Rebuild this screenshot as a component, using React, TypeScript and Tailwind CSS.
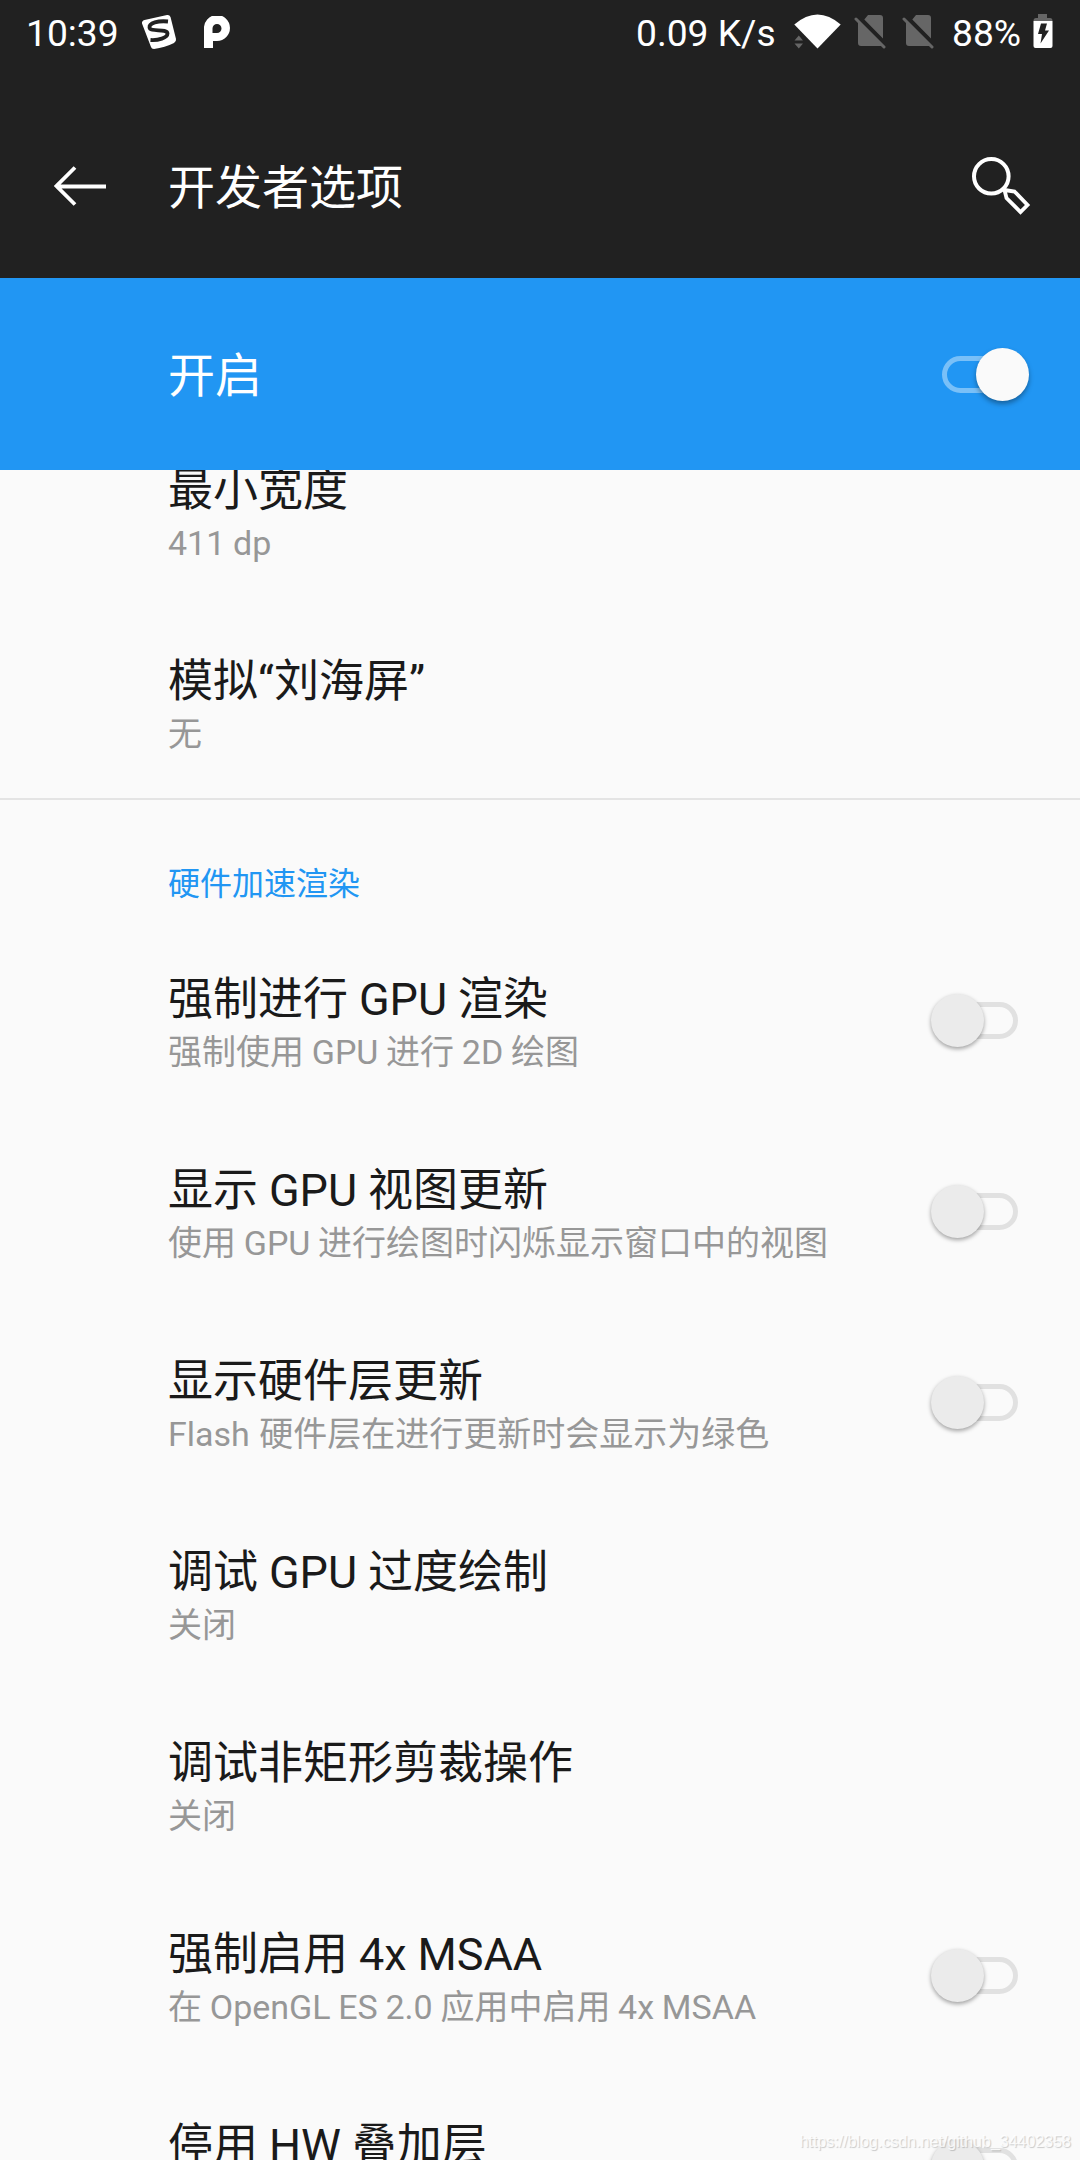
import React from "react";

function Toggle({ on = false }: { on?: boolean }) {
  if (on) {
    return (
      <span className="relative block h-[54px] w-[88px]">
        <span className="absolute left-0 top-[8px] h-[37px] w-[74px] rounded-full border-[5px] border-white/40" />
        <span className="absolute left-[34px] top-0 size-[53px] rounded-full bg-[#fafafa] shadow-[0_3px_5px_rgba(0,0,0,0.35)]" />
      </span>
    );
  }
  return (
    <span className="relative block h-[54px] w-[88px]">
      <span className="absolute left-[14px] top-[8px] h-[37px] w-[74px] rounded-full border-[5px] border-[#e1e1e1]" />
      <span className="absolute left-[1px] top-0 size-[53px] rounded-full bg-[#ebebeb] shadow-[0_2px_4px_rgba(0,0,0,0.36)]" />
    </span>
  );
}

type RowProps = { title: string; note?: string; noteSpacing?: string; toggle?: boolean };

function Row({ title, note, noteSpacing = "[word-spacing:-0.7px]", toggle }: RowProps) {
  return (
    <div className="flex h-[191px] shrink-0 items-start justify-between pl-[168px] pr-[62px]">
      <div className="pt-[49px]">
        <div className="whitespace-nowrap text-[45px] leading-[52px] text-[#1a1a1a] [word-spacing:-0.25px]">{title}</div>
        {note && (
          <div className={`mt-[3px] whitespace-nowrap text-[34px] leading-[46px] text-[#979797] ${noteSpacing}`}>{note}</div>
        )}
      </div>
      {toggle && (
        <div className="pt-[69px]">
          <Toggle />
        </div>
      )}
    </div>
  );
}

function NoSim() {
  return (
    <svg width="32" height="36" viewBox="0 0 32 36">
      <path d="M14 1H26Q29 1 29 4V24.500L10.300 5.500ZM4 8L28 32H7Q4 32 4 29Z" fill="#666" />
      <path d="M2 5L30 33" stroke="#666" strokeWidth="3" strokeLinecap="round" />
    </svg>
  );
}

function StatusBar() {
  return (
    <div className="flex h-[64px] items-start justify-between pl-[26px] pr-[27px] text-[37.2px] leading-[66px] text-white">
      <div className="flex">
        <span className="w-[92px]">10:39</span>
        <svg className="ml-[23px] mt-[14px]" width="36" height="36" viewBox="0 0 36 36">
          <path d="M3.500 6L26 1Q28.500 .5 29.500 3L35 25Q35.500 27.500 33 29Q24 33.500 13 35Q10.500 35 10 33L1 9.500Q.5 7 3.500 6Z" fill="#fff" />
          <path d="M27 7.500C17 6.500 8 9 8.500 13.500C9 18.500 26 14 26.500 19.500C26.500 24 17 26.500 9.500 26" fill="none" stroke="#212121" strokeWidth="3.800" />
        </svg>
        <svg className="ml-[27px] mt-[16px]" width="26" height="32" viewBox="0 0 26 32">
          <path fillRule="evenodd" d="M0 32V13A13 13 0 1 1 13 25H9V32ZM13 8A4.500 4.500 0 0 0 8.500 12.500V17H13A4.500 4.500 0 0 0 13 8Z" fill="#fff" />
        </svg>
      </div>
      <div className="flex">
        <span className="w-[138px] whitespace-nowrap">0.09 K/s</span>
        <svg className="ml-[20px] mt-[14px]" width="48" height="36" viewBox="0 0 48 36">
          <path d="M.3 10.500Q23.500 -9.500 46.700 10.500L23.500 34.500Z" fill="#fff" />
          <path d="M.5 26.500L4.800 21.500L9 26.500ZM.5 29.500H9L4.800 34.500Z" fill="#666" />
        </svg>
        <div className="ml-[12px] mt-[14px] flex gap-[16px]">
          <NoSim />
          <NoSim />
        </div>
        <span className="ml-[18px] w-[73px]">88%</span>
        <svg className="ml-[8px] mt-[14px]" width="20" height="35" viewBox="0 0 20 35">
          <path d="M5 0H14V4H17Q19.500 4 19.500 7H.5Q.5 4 3 4H5Z" fill="#666" />
          <path d="M.5 7H19.500V32Q19.500 34 17.500 34H2.500Q.5 34 .5 32Z" fill="#fff" />
          <path d="M8 9.500H14L12 16.500H16L7.500 29.500L9 20H5Z" fill="#212121" />
        </svg>
      </div>
    </div>
  );
}

const rows: RowProps[] = [
  { title: "强制进行 GPU 渲染", note: "强制使用 GPU 进行 2D 绘图", toggle: true },
  { title: "显示 GPU 视图更新", note: "使用 GPU 进行绘图时闪烁显示窗口中的视图", toggle: true },
  {
    title: "显示硬件层更新",
    note: "Flash 硬件层在进行更新时会显示为绿色",
    noteSpacing: "[word-spacing:1px]",
    toggle: true,
  },
  { title: "调试 GPU 过度绘制", note: "关闭" },
  { title: "调试非矩形剪裁操作", note: "关闭" },
  { title: "强制启用 4x MSAA", note: "在 OpenGL ES 2.0 应用中启用 4x MSAA", toggle: true },
  { title: "停用 HW 叠加层", toggle: true },
];

export default function App() {
  return (
    <div
      lang="zh-CN"
      className="relative flex h-[2160px] w-[1080px] flex-col overflow-hidden bg-[#fafafa] font-['Roboto','Noto_Sans_CJK_SC',sans-serif]"
    >
      <header className="h-[278px] shrink-0 bg-[#212121]">
        <StatusBar />
        <div className="flex h-[214px] items-start text-white">
          <svg className="ml-[54px] mt-[102px]" width="53" height="40" viewBox="0 0 53 40">
            <path d="M21 1.500L2.500 20L21 38.500M2 20.500H52" fill="none" stroke="#fff" strokeWidth="3.800" />
          </svg>
          <h1 className="ml-[61px] mt-[91px] text-[47px] leading-[66px]">开发者选项</h1>
          <svg className="ml-auto mr-[49px] mt-[92px]" width="60" height="60" viewBox="0 0 60 60">
            <circle cx="20.300" cy="20.300" r="17.300" fill="none" stroke="#fff" strokeWidth="4" />
            <path d="M33.500 34L43.500 35.500L56.500 49L49.500 56L35.500 42Z" fill="none" stroke="#fff" strokeWidth="3.800" />
          </svg>
        </div>
      </header>
      <div className="z-10 flex h-[192px] shrink-0 items-start justify-between bg-[#2196f3] pl-[168px] pr-[50px] text-white">
        <div className="pt-[65px] text-[47px] leading-[66px]">开启</div>
        <div className="pt-[70px]">
          <Toggle on />
        </div>
      </div>
      <div className="-mt-[54px] flex flex-col">
        <Row title="最小宽度" note="411 dp" />
        <Row title="模拟“刘海屏”" note="无" />
        <div className="h-[2px] shrink-0 bg-[#e4e4e4]" />
        <div className="h-[125px] shrink-0 pl-[168px] pt-[61px] text-[32px] leading-[46px] text-[#2196f3]">硬件加速渲染</div>
        {rows.map((r) => (
          <Row key={r.title} {...r} />
        ))}
      </div>
      <div className="absolute bottom-[8px] right-[9px] z-20 font-['Liberation_Sans',sans-serif] text-[16px] leading-[20px] text-white/80 [text-shadow:1px_1px_1px_rgba(0,0,0,0.2)]">
        https://blog.csdn.net/github_34402358
      </div>
    </div>
  );
}
